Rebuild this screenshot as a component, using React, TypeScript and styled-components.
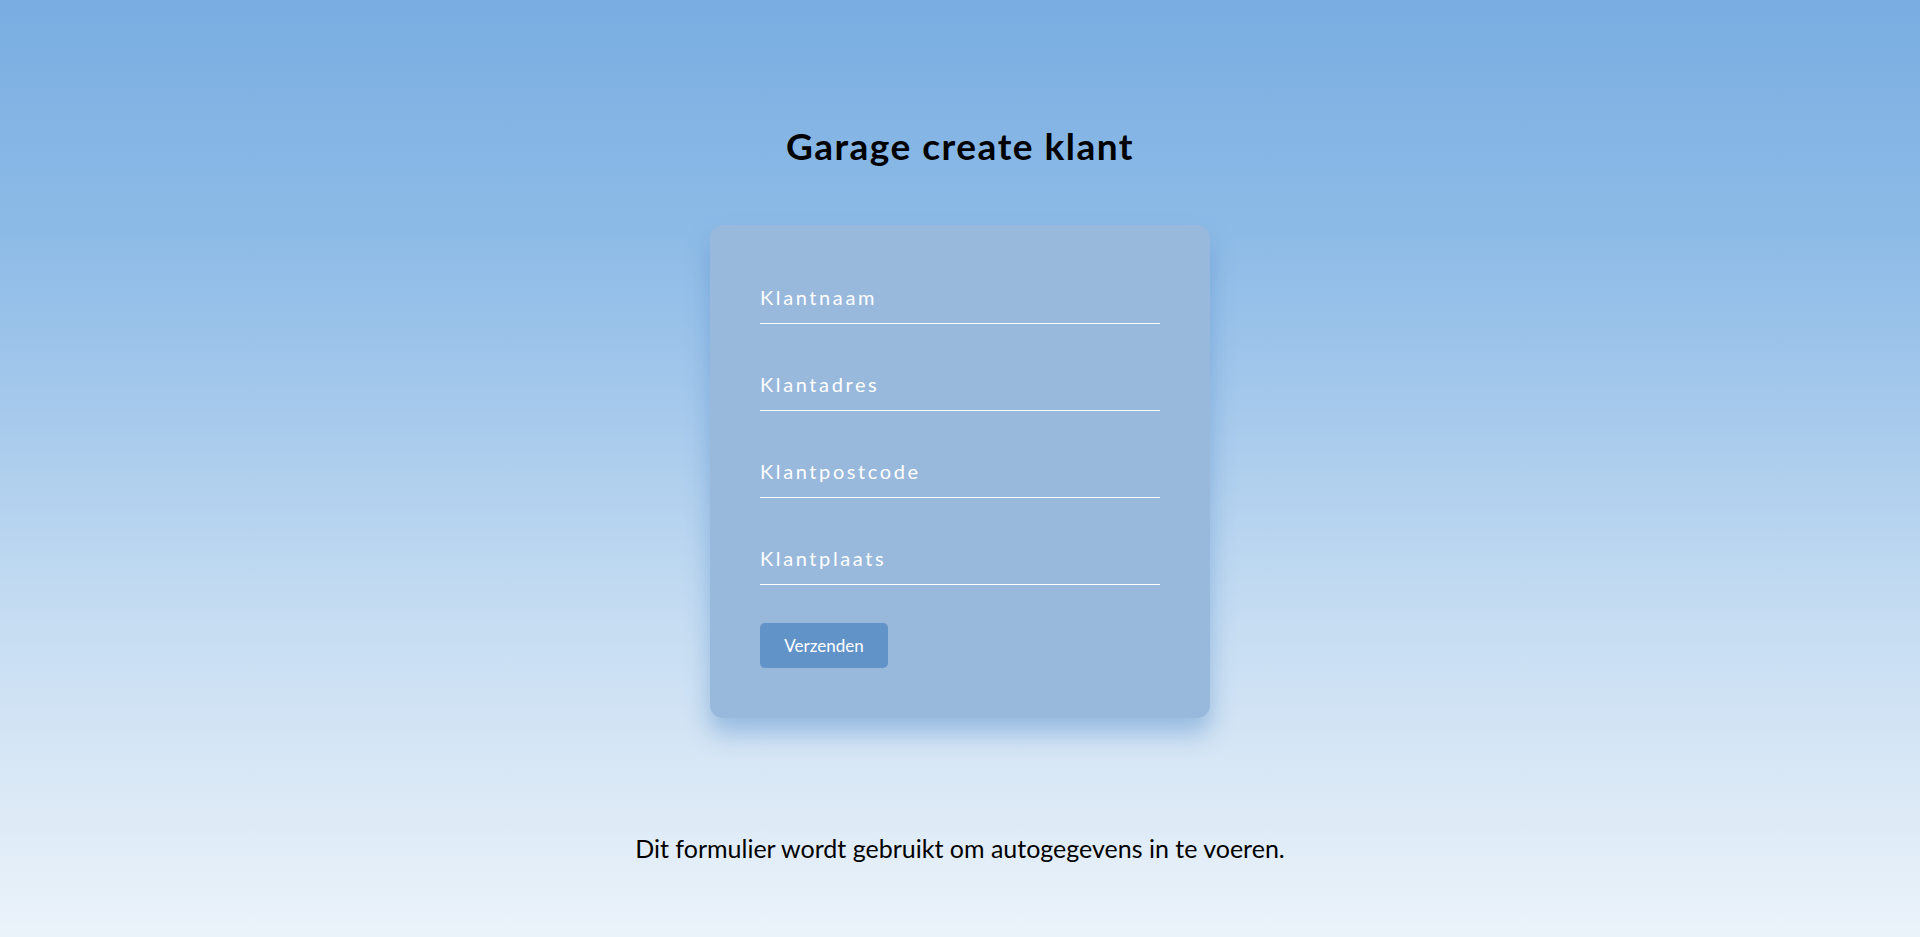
import styled, { createGlobalStyle } from "styled-components";

const GlobalStyle = createGlobalStyle`
  html, body {
    margin: 0;
    padding: 0;
  }
  body {
    font-family: Lato, "Open Sans", sans-serif;
    min-height: 937px;
    background: linear-gradient(
      180deg,
      #79ade1 0%,
      #8dbbe7 25%,
      #a7caec 45%,
      #c4dcf2 65%,
      #dbe9f6 85%,
      #ebf3fa 100%
    );
  }
`;

const Page = styled.main`
  display: flex;
  flex-direction: column;
  align-items: center;
  padding-top: 124px;
  min-height: 937px;
  box-sizing: border-box;
`;

const Title = styled.h1`
  margin: 0 0 57px;
  font-size: 37px;
  line-height: 44px;
  letter-spacing: 1.5px;
  font-weight: 700;
  color: #000;
`;

const Card = styled.div`
  width: 500px;
  box-sizing: border-box;
  padding: 42px 50px 50px;
  background: #98b8dc;
  border-radius: 13px;
  box-shadow: 0 15px 25px rgba(80, 135, 200, 0.45);
`;

const Form = styled.form`
  display: flex;
  flex-direction: column;
  align-items: flex-start;
`;

const Input = styled.input`
  width: 100%;
  box-sizing: border-box;
  height: 57px;
  padding: 17px 0 13px;
  margin: 0 0 30px;
  font-family: inherit;
  font-size: 20px;
  line-height: 26px;
  letter-spacing: 2.6px;
  color: #fff;
  background: transparent;
  border: none;
  border-bottom: 1px solid #fff;
  outline: none;

  &::placeholder {
    color: #fff;
    opacity: 1;
  }

  &:last-of-type {
    margin-bottom: 38px;
  }
`;

const Button = styled.button`
  width: 128px;
  height: 45px;
  border: none;
  border-radius: 5px;
  background: #6193c9;
  color: #fff;
  font-family: inherit;
  font-size: 17px;
  cursor: pointer;
`;

const Note = styled.p`
  margin: 115px 0 0;
  font-size: 25px;
  line-height: 30px;
  color: #000;
`;

const fields = ["Klantnaam", "Klantadres", "Klantpostcode", "Klantplaats"];

export default function App() {
  return (
    <>
      <GlobalStyle />
      <Page>
        <Title>Garage create klant</Title>
        <Card>
          <Form onSubmit={(e) => e.preventDefault()}>
            {fields.map((f) => (
              <Input key={f} type="text" name={f} placeholder={f} />
            ))}
            <Button type="submit">Verzenden</Button>
          </Form>
        </Card>
        <Note>Dit formulier wordt gebruikt om autogegevens in te voeren.</Note>
      </Page>
    </>
  );
}
